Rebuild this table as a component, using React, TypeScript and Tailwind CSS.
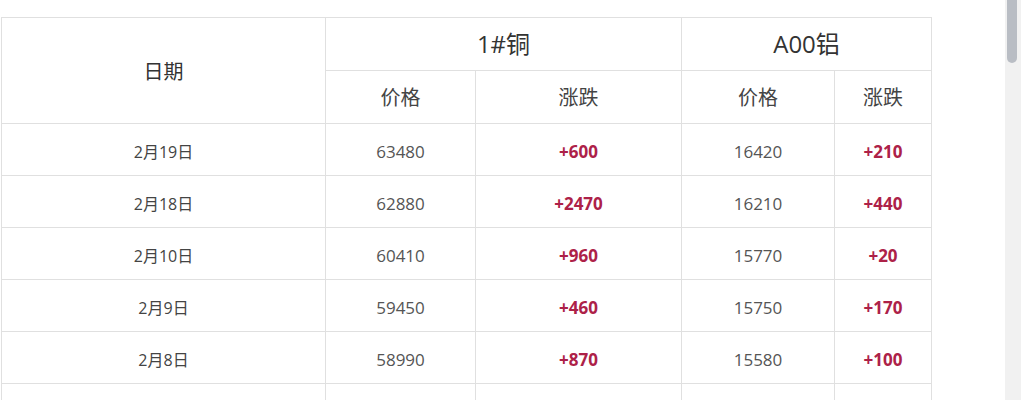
import React from 'react';

interface Row {
  date: string;
  cuPrice: string;
  cuChange: string;
  alPrice: string;
  alChange: string;
}

const rows: Row[] = [
  { date: '2月19日', cuPrice: '63480', cuChange: '+600', alPrice: '16420', alChange: '+210' },
  { date: '2月18日', cuPrice: '62880', cuChange: '+2470', alPrice: '16210', alChange: '+440' },
  { date: '2月10日', cuPrice: '60410', cuChange: '+960', alPrice: '15770', alChange: '+20' },
  { date: '2月9日', cuPrice: '59450', cuChange: '+460', alPrice: '15750', alChange: '+170' },
  { date: '2月8日', cuPrice: '58990', cuChange: '+870', alPrice: '15580', alChange: '+100' },
];

const cell = 'border border-[#e0e0e0] text-center align-middle';
const dataCell = `${cell} pt-[4px]`;

const App: React.FC = () => {
  return (
    <div
      className="flex h-[400px] w-full overflow-hidden bg-white text-[#444]"
      style={{ fontFamily: '"Open Sans", "Noto Sans CJK SC", sans-serif' }}
    >
      {/* Table area */}
      <div className="flex-1 pt-[17px] pl-[1px]">
        <table className="table-fixed border-collapse w-[931px]">
          <colgroup>
            <col className="w-[324px]" />
            <col className="w-[150px]" />
            <col className="w-[206px]" />
            <col className="w-[153px]" />
            <col className="w-[97px]" />
          </colgroup>
          <thead>
            <tr className="h-[53px]">
              <th rowSpan={2} className={`${cell} pt-[2px] text-[20px] font-normal text-[#333]`}>
                日期
              </th>
              <th colSpan={2} className={`${cell} text-[24px] font-normal text-[#333]`}>
                1#铜
              </th>
              <th colSpan={2} className={`${cell} text-[24px] font-normal text-[#333]`}>
                A00铝
              </th>
            </tr>
            <tr className="h-[53px]">
              <th className={`${cell} pt-[2px] text-[20px] font-normal text-[#444]`}>价格</th>
              <th className={`${cell} pt-[2px] text-[20px] font-normal text-[#444]`}>涨跌</th>
              <th className={`${cell} pt-[2px] text-[20px] font-normal text-[#444]`}>价格</th>
              <th className={`${cell} pt-[2px] text-[20px] font-normal text-[#444]`}>涨跌</th>
            </tr>
          </thead>
          <tbody>
            {rows.map((r) => (
              <tr key={r.date} className="h-[52px] text-[17px]">
                <td className={`${dataCell} text-[16px] text-[#444]`}>{r.date}</td>
                <td className={`${dataCell} text-[#555]`}>{r.cuPrice}</td>
                <td className={`${dataCell} font-bold text-[#ad2148]`}>{r.cuChange}</td>
                <td className={`${dataCell} text-[#555]`}>{r.alPrice}</td>
                <td className={`${dataCell} font-bold text-[#ad2148]`}>{r.alChange}</td>
              </tr>
            ))}
            {/* next row, cut off by the window */}
            <tr className="h-[52px]">
              <td className={cell} />
              <td className={cell} />
              <td className={cell} />
              <td className={cell} />
              <td className={cell} />
            </tr>
          </tbody>
        </table>
      </div>

      {/* Scrollbar */}
      <div className="w-[16px] shrink-0 bg-[#f1f1f1] pl-[2px] pr-[4px]">
        <div className="h-[63px] rounded-b-full bg-[#b9bdc4]" />
      </div>
    </div>
  );
};

export default App;
